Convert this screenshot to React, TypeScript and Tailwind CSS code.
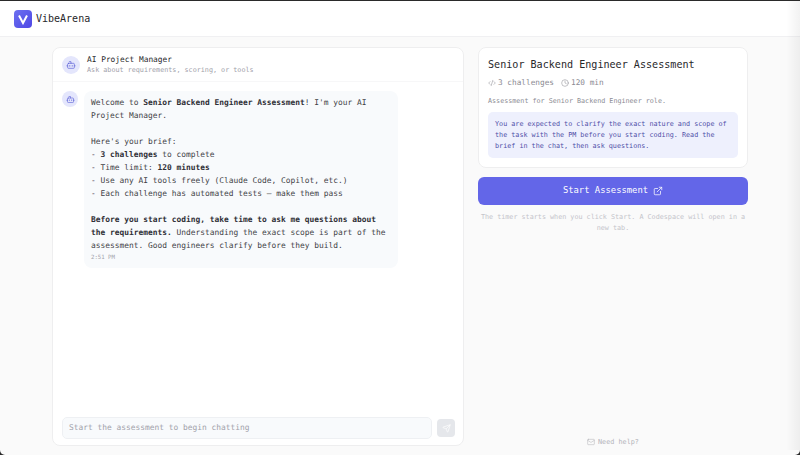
import { Bot, Clock, CodeXml, ExternalLink, Mail, Send } from "lucide-react";

export default function App() {
  return (
    <div className="relative h-[455px] w-[800px] overflow-hidden bg-[#2a2a2a] pt-px font-['DejaVu_Sans_Mono',monospace]">
      <div className="flex h-[454px] flex-col overflow-hidden rounded-b-[5px] bg-[#fafafa]">
        <header className="flex h-[36px] shrink-0 items-center gap-[4px] border-b border-[#f0f0f2] bg-white pl-[14px]">
          <div className="flex h-[18px] w-[18px] items-center justify-center rounded-[4px] bg-gradient-to-br from-[#6d70f0] to-[#4f46e5]">
            <svg viewBox="0 0 24 24" className="h-[12px] w-[12px]" fill="none" stroke="#fff" strokeWidth="4" strokeLinejoin="miter">
              <path d="M4 5l8 15 8-15" />
            </svg>
          </div>
          <span className="text-[10px] text-[#27272a]">VibeArena</span>
        </header>
        <main className="flex min-h-0 flex-1 gap-[14px] pt-[10px] pl-[52px]">
          <section className="flex h-[399px] w-[412px] flex-col overflow-hidden rounded-[8px] border border-[#eeeeef] bg-white">
            <div className="flex h-[34px] shrink-0 items-center gap-[7px] border-b border-[#f7f7f8] pl-[9px] pt-px">
              <div className="flex h-[18px] w-[18px] items-center justify-center rounded-full bg-[#e4e6fc]">
                <Bot className="h-[10px] w-[10px] text-[#5b5fd6]" strokeWidth={1.6} />
              </div>
              <div className="flex flex-col">
                <span className="text-[7.85px] leading-[10px] text-[#27272a]">AI Project Manager</span>
                <span className="text-[6.75px] leading-[10px] text-[#a1a1aa]">Ask about requirements, scoring, or tools</span>
              </div>
            </div>
            <div className="flex min-h-0 flex-1 items-start gap-[6px] pt-[9px] pl-[9px]">
              <div className="flex h-[16px] w-[16px] shrink-0 items-center justify-center rounded-full bg-[#e4e6fc]">
                <Bot className="h-[9px] w-[9px] text-[#5b5fd6]" strokeWidth={1.6} />
              </div>
              <div className="w-[314px] rounded-[8px] bg-[#f8fafc] pt-[5px] pr-[6px] pb-[5px] pl-[7px] text-[7.9px] leading-[13px] text-[#3f3f46]">
                <p>
                  Welcome to <b className="font-semibold text-[#2f2f36]">Senior Backend Engineer Assessment</b>! I'm your AI Project Manager.
                </p>
                <p className="mt-[13px]">Here's your brief:</p>
                <p>
                  - <b className="font-semibold text-[#2f2f36]">3 challenges</b> to complete
                </p>
                <p>
                  - Time limit: <b className="font-semibold text-[#2f2f36]">120 minutes</b>
                </p>
                <p>- Use any AI tools freely (Claude Code, Copilot, etc.)</p>
                <p>- Each challenge has automated tests — make them pass</p>
                <p className="mt-[13px]">
                  <b className="font-semibold text-[#2f2f36]">Before you start coding, take time to ask me questions about the requirements.</b> Understanding the exact scope is part of the assessment. Good engineers clarify before they build.
                </p>
                <p className="text-[5.7px] leading-[11px] text-[#a1a1aa]">2:51 PM</p>
              </div>
            </div>
            <div className="flex shrink-0 items-center gap-[5px] pr-[8px] pb-[6px] pl-[9px]">
              <div className="flex h-[22px] w-[370px] items-center rounded-[5px] border border-[#eef0f3] bg-[#f8fafc] pl-[6px] text-[7.9px] text-[#a1a1aa]">
                Start the assessment to begin chatting
              </div>
              <div className="flex h-[18px] w-[18px] items-center justify-center rounded-[4px] bg-[#e5e7eb]">
                <Send className="h-[9px] w-[9px] text-white" strokeWidth={1.8} />
              </div>
            </div>
          </section>
          <aside className="flex h-[400px] w-[270px] flex-col">
            <div className="h-[121px] rounded-[8px] border border-[#eeeeef] bg-white px-[9px] pt-[10px]">
              <h1 className="text-[10.1px] leading-[13px] text-[#27272a]">Senior Backend Engineer Assessment</h1>
              <div className="mt-[6px] flex items-center text-[7.75px] leading-[11px] text-[#8b8b93]">
                <CodeXml className="mr-[2px] h-[8px] w-[8px]" strokeWidth={1.6} />
                <span>3 challenges</span>
                <Clock className="mr-[2px] ml-[7px] h-[8px] w-[8px]" strokeWidth={1.6} />
                <span>120 min</span>
              </div>
              <p className="mt-[8px] text-[6.72px] leading-[10px] text-[#8b8b93]">Assessment for Senior Backend Engineer role.</p>
              <div className="mt-[6px] h-[46px] rounded-[5px] bg-[#eef0fd] px-[7px] pt-[7px] text-[6.75px] leading-[11px] text-[#4f4fa8]">
                You are expected to clarify the exact nature and scope of the task with the PM before you start coding. Read the brief in the chat, then ask questions.
              </div>
            </div>
            <button className="mt-[9px] flex h-[28px] items-center justify-center gap-[5px] rounded-[6px] bg-[#6366e8] text-[8.85px] text-white">
              Start Assessment
              <ExternalLink className="h-[10px] w-[10px]" strokeWidth={1.8} />
            </button>
            <p className="mt-[7px] text-center text-[6.75px] leading-[10.5px] text-[#c4c4ca]">
              The timer starts when you click Start. A Codespace will open in a new tab.
            </p>
            <div className="mt-auto flex items-center justify-center gap-[3px] text-[6.8px] leading-[10px] text-[#b4b4ba]">
              <Mail className="h-[8px] w-[8px]" strokeWidth={1.6} />
              Need help?
            </div>
          </aside>
        </main>
      </div>
      <div className="pointer-events-none absolute top-px right-0 h-[449px] w-[14px] bg-gradient-to-r from-transparent to-[#0000000d]" />
    </div>
  );
}
